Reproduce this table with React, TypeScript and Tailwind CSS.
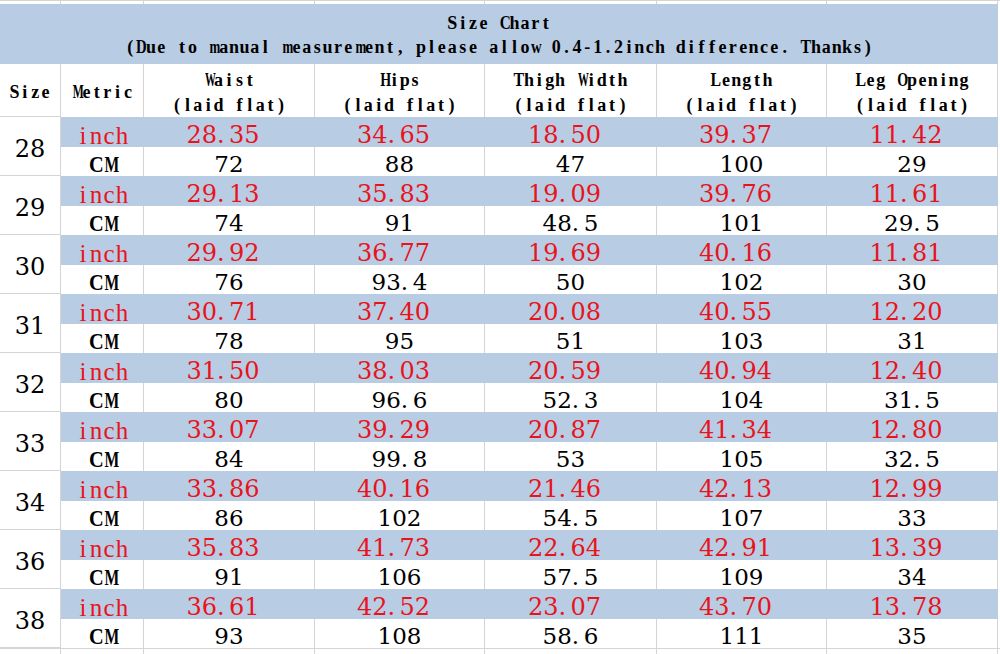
const rows = [
  { size: "28", inch: ["28.35", "34.65", "18.50", "39.37", "11.42"], cm: ["72", "88", "47", "100", "29"] },
  { size: "29", inch: ["29.13", "35.83", "19.09", "39.76", "11.61"], cm: ["74", "91", "48.5", "101", "29.5"] },
  { size: "30", inch: ["29.92", "36.77", "19.69", "40.16", "11.81"], cm: ["76", "93.4", "50", "102", "30"] },
  { size: "31", inch: ["30.71", "37.40", "20.08", "40.55", "12.20"], cm: ["78", "95", "51", "103", "31"] },
  { size: "32", inch: ["31.50", "38.03", "20.59", "40.94", "12.40"], cm: ["80", "96.6", "52.3", "104", "31.5"] },
  { size: "33", inch: ["33.07", "39.29", "20.87", "41.34", "12.80"], cm: ["84", "99.8", "53", "105", "32.5"] },
  { size: "34", inch: ["33.86", "40.16", "21.46", "42.13", "12.99"], cm: ["86", "102", "54.5", "107", "33"] },
  { size: "36", inch: ["35.83", "41.73", "22.64", "42.91", "13.39"], cm: ["91", "106", "57.5", "109", "34"] },
  { size: "38", inch: ["36.61", "42.52", "23.07", "43.70", "13.78"], cm: ["93", "108", "58.6", "111", "35"] },
];

const headers = ["Waist", "Hips", "Thigh Width", "Length", "Leg Opening"];

// fixed widths so the grid lines land where the sheet has them
const colW = ["w-[171px]", "w-[170px]", "w-[172px]", "w-[170px]", "w-[171px]"];

const line = "border-[#d4d4d4]";
const serif = "font-['DejaVu_Serif','Liberation_Serif',serif]";
const times = "font-['Liberation_Serif','Times_New_Roman',serif]";

// squeeze the wide Times letters into a half-width cell, SimSun style
const squeeze: Record<string, string> = {
  m: "scale-x-[0.72]",
  w: "scale-x-[0.82]",
  M: "scale-x-[0.65]",
  W: "scale-x-[0.6]",
  C: "scale-x-[0.85]",
  D: "scale-x-[0.82]",
  H: "scale-x-[0.78]",
  O: "scale-x-[0.78]",
  T: "scale-x-[0.88]",
  L: "scale-x-[0.88]",
};

function Cells({ text, cell }: { text: string; cell: string }) {
  return (
    <span className={`inline-flex ${times}`}>
      {text.split("").map((ch, i) => (
        <span key={i} className={`inline-block shrink-0 text-center ${cell} ${squeeze[ch] ?? ""}`}>
          {ch === " " ? "\u00a0" : ch}
        </span>
      ))}
    </span>
  );
}

function Num({ value }: { value: string }) {
  const [whole, frac] = value.split(".");
  return (
    <span className="inline-flex items-baseline">
      <span>{whole}</span>
      {frac !== undefined && (
        <>
          <span className="inline-block w-[12px] text-left">.</span>
          <span>{frac}</span>
        </>
      )}
    </span>
  );
}

export default function App() {
  return (
    <div className="w-[1000px] h-[654px] overflow-hidden bg-white text-black">
      {/* thin row above the table */}
      <div className={`flex h-[4px] border-t ${line}`}>
        <div className={`w-[61px] border-r ${line}`} />
        <div className={`w-[83px] border-r ${line}`} />
        {colW.map((w, i) => (
          <div key={i} className={`${w} border-r ${line}`} />
        ))}
      </div>

      {/* title */}
      <div className="flex h-[60px]">
        <div className="w-[998px] bg-[#b8cce4] flex flex-col items-center justify-center pt-[2px] leading-[24px] text-[18px] font-bold">
          <Cells text="Size Chart" cell="w-[10.4px]" />
          <Cells text="(Due to manual measurement, please allow 0.4-1.2inch difference. Thanks)" cell="w-[10.4px]" />
        </div>
      </div>

      {/* column headings */}
      <div className="flex h-[53px] text-[18px] font-bold leading-[25px]">
        <div className={`w-[61px] border-r border-b ${line} flex items-center justify-center pt-[4px]`}>
          <Cells text="Size" cell="w-[10.4px]" />
        </div>
        <div className={`w-[83px] border-r ${line} flex items-center justify-center pt-[4px]`}>
          <Cells text="Metric" cell="w-[10.4px]" />
        </div>
        {headers.map((h, i) => (
          <div key={h} className={`${colW[i]} border-r ${line} flex flex-col items-center justify-center pt-[4px]`}>
            <Cells text={h} cell="w-[10.4px]" />
            <Cells text="(laid flat)" cell="w-[10.4px]" />
          </div>
        ))}
      </div>

      {rows.map((r) => (
        <div key={r.size} className="flex h-[59px]">
          <div className={`w-[61px] border-r border-b ${line} flex items-center justify-center pt-[5px] text-[24px] leading-none ${serif}`}>
            {r.size}
          </div>
          <div className="flex flex-col">
            <div className="flex h-[30px] bg-[#b8cce4] text-[#e8141c] leading-none">
              <div className="w-[83px] flex items-center justify-center pt-[6px] text-[25px]">
                <Cells text="inch" cell="w-[13px]" />
              </div>
              {r.inch.map((v, i) => (
                <div key={i} className={`${colW[i]} flex items-center justify-center pt-[5px] pr-[13px] text-[24px] ${serif}`}>
                  <Num value={v} />
                </div>
              ))}
            </div>
            <div className="flex h-[29px] leading-none">
              <div className={`w-[83px] border-r ${line} flex items-center justify-center pt-[5px] text-[24px] font-bold`}>
                <Cells text="CM" cell="w-[14px]" />
              </div>
              {r.cm.map((v, i) => (
                <div key={i} className={`${colW[i]} border-r ${line} flex items-center justify-center pt-[5px] text-[23px] ${serif}`}>
                  <Num value={v} />
                </div>
              ))}
            </div>
          </div>
        </div>
      ))}

      {/* partial row at the bottom edge */}
      <div className={`flex h-[6px] border-t ${line}`}>
        <div className={`w-[61px] border-r ${line}`} />
        <div className={`w-[83px] border-r ${line}`} />
        {colW.map((w, i) => (
          <div key={i} className={`${w} border-r ${line}`} />
        ))}
      </div>
    </div>
  );
}
